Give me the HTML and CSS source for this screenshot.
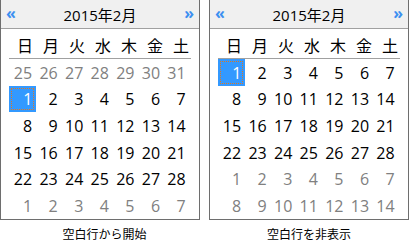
FILE: index.html
```html
<!DOCTYPE html>
<html lang="ja">
<head>
<meta charset="utf-8">
<title>Calendar</title>
<link rel="stylesheet" href="styles.css">
</head>
<body>
<div class="page">
  <div class="col col-left">
    <div class="cal">
      <div class="cal-head"><span class="nav">«</span><span class="title">2015年2月</span><span class="nav">»</span></div>
      <div class="cal-body">
        <div class="dow"><span>日</span><span>月</span><span>火</span><span>水</span><span>木</span><span>金</span><span>土</span></div>
        <div class="days">
          <span class="other">25</span><span class="other">26</span><span class="other">27</span><span class="other">28</span><span class="other">29</span><span class="other">30</span><span class="other">31</span>
          <span class="sel">1</span><span>2</span><span>3</span><span>4</span><span>5</span><span>6</span><span>7</span>
          <span>8</span><span>9</span><span>10</span><span>11</span><span>12</span><span>13</span><span>14</span>
          <span>15</span><span>16</span><span>17</span><span>18</span><span>19</span><span>20</span><span>21</span>
          <span>22</span><span>23</span><span>24</span><span>25</span><span>26</span><span>27</span><span>28</span>
          <span class="other">1</span><span class="other">2</span><span class="other">3</span><span class="other">4</span><span class="other">5</span><span class="other">6</span><span class="other">7</span>
        </div>
      </div>
    </div>
    <div class="caption">空白行から開始</div>
  </div>
  <div class="col col-right">
    <div class="cal">
      <div class="cal-head"><span class="nav">«</span><span class="title">2015年2月</span><span class="nav">»</span></div>
      <div class="cal-body">
        <div class="dow"><span>日</span><span>月</span><span>火</span><span>水</span><span>木</span><span>金</span><span>土</span></div>
        <div class="days">
          <span class="sel">1</span><span>2</span><span>3</span><span>4</span><span>5</span><span>6</span><span>7</span>
          <span>8</span><span>9</span><span>10</span><span>11</span><span>12</span><span>13</span><span>14</span>
          <span>15</span><span>16</span><span>17</span><span>18</span><span>19</span><span>20</span><span>21</span>
          <span>22</span><span>23</span><span>24</span><span>25</span><span>26</span><span>27</span><span>28</span>
          <span class="other">1</span><span class="other">2</span><span class="other">3</span><span class="other">4</span><span class="other">5</span><span class="other">6</span><span class="other">7</span>
          <span class="other">8</span><span class="other">9</span><span class="other">10</span><span class="other">11</span><span class="other">12</span><span class="other">13</span><span class="other">14</span>
        </div>
      </div>
    </div>
    <div class="caption">空白行を非表示</div>
  </div>
</div>
</body>
</html>
```

FILE: styles.css
```css
html, body {
  margin: 0;
  padding: 0;
  background: #ffffff;
}

body {
  font-family: "Open Sans", "Noto Sans CJK JP", sans-serif;
  color: #000000;
}

.page {
  display: flex;
  width: 411px;
  height: 243px;
}

.col-left {
  width: 209px;
}

.col-right {
  width: 200px;
}

.cal {
  box-sizing: border-box;
  width: 200px;
  height: 220px;
  border-left: 1px solid #6e6e6e;
  border-right: 1px solid #6e6e6e;
  border-bottom: 1px solid #6e6e6e;
  display: flex;
  flex-direction: column;
}

.cal-head {
  height: 28px;
  background: #f0f0f0;
  border-bottom: 1px solid #a0a0a0;
  display: flex;
  align-items: center;
  justify-content: space-between;
  padding: 0 5px;
}

.nav {
  color: #3c8ff0;
  font-size: 16px;
  font-weight: 700;
  line-height: 28px;
  padding-bottom: 2px;
}

.title {
  font-size: 15px;
  line-height: 28px;
  padding-top: 1px;
}

.cal-body {
  flex: 1;
  display: flex;
  flex-direction: column;
  padding-left: 8px;
}

.dow {
  display: grid;
  grid-template-columns: repeat(7, 26px);
  width: 182px;
  height: 29px;
  border-bottom: 1px solid #a0a0a0;
  font-family: "Noto Sans CJK JP", sans-serif;
  font-size: 16px;
}

.dow span {
  text-align: right;
  padding-right: 2px;
  line-height: 29px;
  padding-top: 2px;
}

.days {
  flex: 1;
  display: grid;
  grid-template-columns: repeat(7, 25.6px);
  grid-template-rows: repeat(6, 1fr);
  font-size: 16px;
}

.days span {
  display: flex;
  align-items: center;
  justify-content: flex-end;
  padding-right: 2.5px;
  padding-top: 1px;
}

.days .other {
  color: #808080;
}

.days .sel {
  background: #3399ff;
  color: #ffffff;
  outline: 1px dotted #e0781e;
  outline-offset: -3px;
  width: 27px;
  box-sizing: border-box;
  padding-right: 3.5px;
}

.caption {
  text-align: center;
  font-family: "Noto Sans CJK JP", sans-serif;
  font-size: 12px;
  line-height: 16px;
  margin-top: 6px;
}
```
